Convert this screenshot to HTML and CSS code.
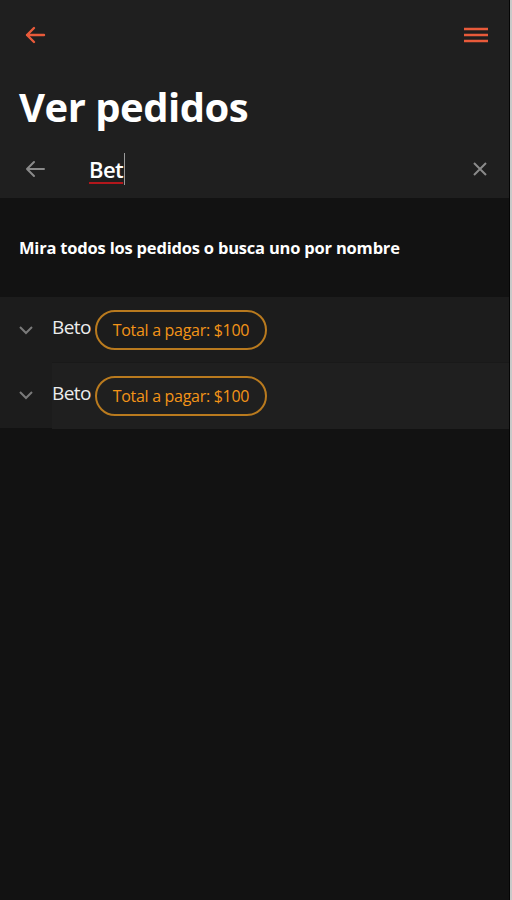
FILE: index.html
```html
<!DOCTYPE html>
<html lang="es">
<head>
    <meta charset="UTF-8">
    <title>Ver pedidos</title>
    <link rel="stylesheet" href="styles.css">
</head>
<body>
    <div class="app">
        <!-- Header with title and search -->
        <header class="header">
            <div class="toolbar">
                <button class="icon-btn accent" aria-label="Volver">
                    <svg width="24" height="24" viewBox="0 0 24 24"><path d="M21 12H4M11 5l-7 7 7 7" fill="none" stroke="currentColor" stroke-width="2.4" stroke-linecap="round" stroke-linejoin="round"/></svg>
                </button>
                <button class="icon-btn accent" aria-label="Menú">
                    <svg width="26" height="22" viewBox="0 0 26 22"><path d="M1 5h24M1 11h24M1 17h24" fill="none" stroke="currentColor" stroke-width="2.6"/></svg>
                </button>
            </div>
            <h1 class="title">Ver pedidos</h1>
            <div class="search">
                <button class="icon-btn muted" aria-label="Cerrar búsqueda">
                    <svg width="24" height="24" viewBox="0 0 24 24"><path d="M21 12H4M11 5l-7 7 7 7" fill="none" stroke="currentColor" stroke-width="2" stroke-linecap="round" stroke-linejoin="round"/></svg>
                </button>
                <div class="search-field">
                    <span class="search-text">Bet</span><span class="caret"></span>
                </div>
                <button class="icon-btn muted" aria-label="Limpiar">
                    <svg width="16" height="16" viewBox="0 0 16 16"><path d="M2 2l12 12M14 2L2 14" fill="none" stroke="currentColor" stroke-width="2"/></svg>
                </button>
            </div>
        </header>

        <section class="intro">
            <p>Mira todos los pedidos o busca uno por nombre</p>
        </section>

        <ul class="orders">
            <li class="order">
                <span class="chevron">
                    <svg width="16" height="10" viewBox="0 0 16 10"><path d="M2 2l6 6 6-6" fill="none" stroke="currentColor" stroke-width="2"/></svg>
                </span>
                <div class="order-body">
                    <span class="order-name">Beto</span>
                    <span class="badge">Total a pagar: $100</span>
                </div>
            </li>
            <li class="order">
                <span class="chevron">
                    <svg width="16" height="10" viewBox="0 0 16 10"><path d="M2 2l6 6 6-6" fill="none" stroke="currentColor" stroke-width="2"/></svg>
                </span>
                <div class="order-body">
                    <span class="order-name">Beto</span>
                    <span class="badge">Total a pagar: $100</span>
                </div>
            </li>
        </ul>
    </div>
</body>
</html>
```

FILE: styles.css
```css
html, body {
    margin: 0;
    padding: 0;
    height: 100%;
}
body {
    background: #c9c9c9;
    font-family: "Open Sans", "Noto Sans", sans-serif;
    color: #fff;
}
.app {
    width: 509px;
    height: 900px;
    background: #121212;
    border-right: 1px solid #050505;
}
.header {
    background: #1f1f1f;
    height: 198px;
}
.toolbar {
    display: flex;
    justify-content: space-between;
    align-items: center;
    height: 70px;
    padding: 0 20px 0 23px;
}
.icon-btn {
    background: none;
    border: none;
    padding: 0;
    display: flex;
    align-items: center;
    justify-content: center;
    cursor: pointer;
}
.icon-btn.accent {
    color: #e85a3a;
}
.icon-btn.muted {
    color: #8a8a8a;
}
.title {
    margin: 13px 0 0 19px;
    font-size: 40px;
    font-weight: 700;
    line-height: 48px;
    letter-spacing: -0.5px;
}
.search {
    display: flex;
    align-items: center;
    height: 40px;
    margin-top: 18px;
    padding: 0 21px 0 23px;
}
.search-field {
    flex-grow: 1;
    display: flex;
    align-items: center;
    padding-left: 42px;
}
.search-text {
    font-size: 22px;
    font-weight: 600;
    line-height: 28px;
    letter-spacing: -0.6px;
    text-decoration: underline solid #b3171c;
    text-decoration-thickness: 2px;
    text-underline-offset: 4px;
}
.caret {
    display: inline-block;
    width: 1px;
    height: 32px;
    margin-left: 1px;
    background: #9a9a9a;
}
.intro {
    height: 99px;
    display: flex;
    align-items: center;
    padding-left: 19px;
}
.intro p {
    margin: 0;
    font-size: 16.5px;
    font-weight: 700;
    letter-spacing: -0.2px;
}
.orders {
    list-style: none;
    margin: 0;
    padding: 0;
    background: #1c1c1c;
}
.order {
    display: flex;
    align-items: center;
    height: 65px;
}
.order + .order {
    height: 66px;
}
.order + .order .order-body {
    background: #1f1f1f;
    border-top: 1px solid #191919;
}
.chevron {
    width: 52px;
    display: flex;
    justify-content: center;
    color: #7a7a7a;
}
.order-body {
    flex-grow: 1;
    display: flex;
    align-items: center;
    height: 100%;
    gap: 4px;
}
.order-name {
    font-size: 19px;
    letter-spacing: -0.6px;
    color: #ececec;
    margin-top: -5px;
}
.badge {
    border: 2px solid #b97a1e;
    border-radius: 20px;
    padding: 0 16px;
    height: 36px;
    display: flex;
    align-items: center;
    font-size: 16px;
    letter-spacing: -0.3px;
    color: #f39418;
}
```
